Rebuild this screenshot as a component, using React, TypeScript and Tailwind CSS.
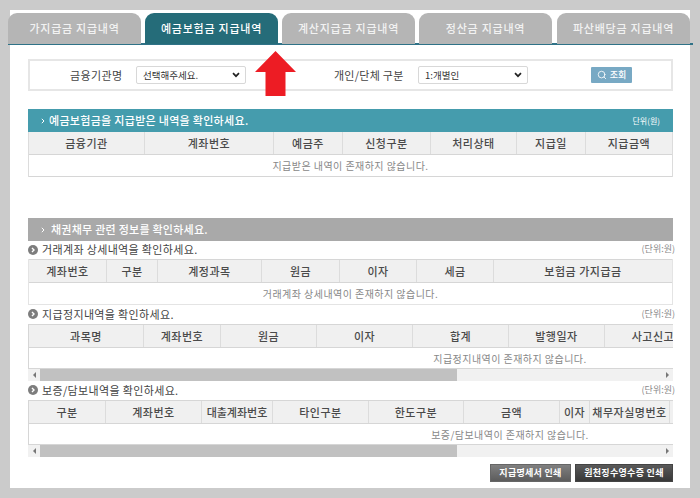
import React from "react";
import { Search } from "lucide-react";

const font = { fontFamily: '"Noto Sans CJK KR", "Noto Sans", sans-serif' };

function Head({ cols, labels, width, h }: { cols: number[]; labels: string[]; width: string; h: string }) {
  return (
    <div className={`flex ${h} ${width} bg-[#f0f0f0] border-y border-[#d6d6d6] shrink-0`}>
      {labels.map((l, i) => (
        <div
          key={i}
          style={{ width: cols[i] }}
          className={`shrink-0 flex items-center justify-center whitespace-nowrap text-[11px] text-[#4a4a4a] font-medium border-r border-[#dcdcdc] last:border-r-0 overflow-hidden ${
            l === "대출계좌번호" ? "tracking-[0px]" : "tracking-[0.5px]"
          }`}
        >
          {l}
        </div>
      ))}
    </div>
  );
}

function SubTitle({ text, h }: { text: string; h: string }) {
  return (
    <div className={`flex items-center ${h}`}>
      <svg width="10" height="10" viewBox="0 0 10 10" className="mr-[4px] mb-[1px] shrink-0">
        <circle cx="5" cy="5" r="5" fill="#7d7d7d" />
        <path d="M4 3 L6 5 L4 7" fill="none" stroke="#ffffff" strokeWidth="1.4" />
      </svg>
      <span className="mb-[1px] text-[11px] tracking-[0.35px] text-[#444]">{text}</span>
      <span className="ml-auto mr-[-2px] mb-[2px] text-[9px] text-[#8a8a8a]">(단위:원)</span>
    </div>
  );
}

function ScrollBar() {
  return (
    <div className="flex items-center h-[12px] bg-[#f1f1f1]">
      <div className="w-[12px] flex justify-center">
        <div className="w-0 h-0 border-y-[3px] border-y-transparent border-r-[3px] border-r-[#777]" />
      </div>
      <div className="w-[417px] h-full bg-[#c1c1c1]" />
      <div className="ml-auto w-[12px] flex justify-center">
        <div className="w-0 h-0 border-y-[3px] border-y-transparent border-l-[3px] border-l-[#777]" />
      </div>
    </div>
  );
}

function Tab({ label, active, w = "w-[133px]" }: { label: string; active?: boolean; w?: string }) {
  return (
    <div
      className={`${w} h-[31px] rounded-t-[9px] flex items-center justify-center text-[11px] tracking-[0.75px] font-medium ${
        active ? "bg-[#256c79] text-white" : "bg-[#b5b5b5] text-[#f2f2f2]"
      }`}
    >
      {label}
    </div>
  );
}

function Select({ w, text }: { w: string; text: string }) {
  return (
    <div className={`${w} h-[18px] bg-white border border-[#d8d8d8] rounded-[2px] flex items-center pl-[6px] pr-[5px]`}>
      <span className="text-[9.5px] text-[#333]">{text}</span>
      <svg width="8" height="6" viewBox="0 0 8 6" className="ml-auto">
        <path d="M1 1.2 L4 4.2 L7 1.2" fill="none" stroke="#222" strokeWidth="1.7" />
      </svg>
    </div>
  );
}

function Chevron() {
  return (
    <svg width="4" height="6" viewBox="0 0 4 6" className="mr-[4px] shrink-0">
      <path d="M0.8 0.8 L3 3 L0.8 5.2" fill="none" stroke="#ffffff" strokeWidth="1" />
    </svg>
  );
}

const t1 = [116, 129, 69, 88, 86, 69, 86];
const t2 = [78, 51, 104, 78, 77, 77, 178];
const t3 = [115, 77, 96, 96, 96, 96, 97, 90];
const t4 = [77, 96, 71, 96, 95, 96, 30, 80, 60];

export default function App() {
  return (
    <div style={font} className="relative w-[700px] h-[498px] overflow-hidden bg-[#cbcbcb] p-[10px]">
      <div className="h-[478px] bg-white">
        <div className="ml-[-2px] mr-[-3px] pt-[3px] flex gap-[4px] h-[35px] border-b-2 border-[#2f7287]">
          <Tab label="가지급금 지급내역" />
          <Tab label="예금보험금 지급내역" active />
          <Tab label="계산지급금 지급내역" />
          <Tab label="정산금 지급내역" />
          <Tab label="파산배당금 지급내역" w="w-[133px] ml-[1px]" />
        </div>

        <div className="mx-[18px] w-[645px]">
          <div className="mt-[14px] h-[32px] border-2 border-[#e6e6e6] flex items-center">
            <span className="ml-[40px] w-[66px] text-[11px] tracking-[0.35px] text-[#444]">금융기관명</span>
            <Select w="w-[110px]" text="선택해주세요." />
            <span className="ml-[88px] w-[84px] text-[11px] tracking-[0.25px] text-[#444] whitespace-nowrap">개인/단체 구분</span>
            <Select w="w-[110px]" text="1:개별인" />
            <div className="ml-[63px] w-[41px] h-[16px] bg-[#78a9c4] rounded-[1px] flex items-center justify-center gap-[3px] text-[9px] font-medium text-white">
              <Search size={10} strokeWidth={2} />
              <span>조회</span>
            </div>
          </div>

          <div className="mt-[18px] h-[23px] bg-[#459cad] flex items-center text-white pl-[13px] pr-[13px]">
            <Chevron />
            <span className="text-[11px] tracking-[0.3px] font-medium">예금보험금을 지급받은 내역을 확인하세요.</span>
            <span className="ml-auto text-[8px]">단위(원)</span>
          </div>
          <div className="border-x border-[#dcdcdc]">
            <Head cols={t1} width="w-[643px] border-t-0" h="h-[23px]" labels={["금융기관", "계좌번호", "예금주", "신청구분", "처리상태", "지급일", "지급금액"]} />
            <div className="h-[22px] border-b border-[#d6d6d6] flex items-center justify-center text-[10px] tracking-[0.45px] text-[#888]">
              지급받은 내역이 존재하지 않습니다.
            </div>
          </div>

          <div className="mt-[41px] h-[23px] bg-[#a9a9a9] flex items-center text-white pl-[13px]">
            <Chevron />
            <span className="ml-[2px] text-[11px] tracking-[0.25px] font-medium">채권채무 관련 정보를 확인하세요.</span>
          </div>

          <SubTitle text="거래계좌 상세내역을 확인하세요." h="h-[18px]" />
          <div className="border-x border-[#e4e4e4]">
            <Head cols={t2} width="w-[643px]" h="h-[24px]" labels={["계좌번호", "구분", "계정과목", "원금", "이자", "세금", "보험금 가지급금"]} />
            <div className="h-[22px] border-b border-[#e4e4e4] flex items-center justify-center text-[10px] tracking-[0.45px] text-[#888]">
              거래계좌 상세내역이 존재하지 않습니다.
            </div>
          </div>

          <SubTitle text="지급정지내역을 확인하세요." h="h-[19px]" />
          <div className="border-l border-[#d6d6d6] overflow-hidden">
            <Head cols={t3} width="w-[962px]" h="h-[24px]" labels={["과목명", "계좌번호", "원금", "이자", "합계", "발행일자", "사고신고", ""]} />
            <div className="h-[21px] w-[962px] flex items-center justify-center text-[10px] tracking-[0.45px] text-[#888] border-b border-[#d6d6d6]">
              지급정지내역이 존재하지 않습니다.
            </div>
          </div>
          <ScrollBar />

          <SubTitle text="보증/담보내역을 확인하세요." h="h-[19px]" />
          <div className="border-l border-[#d6d6d6] overflow-hidden">
            <Head cols={t4} width="w-[962px]" h="h-[24px]" labels={["구분", "계좌번호", "대출계좌번호", "타인구분", "한도구분", "금액", "이자", "채무자실명번호", ""]} />
            <div className="h-[21px] w-[962px] flex items-center justify-center text-[10px] tracking-[0.45px] text-[#888] border-b border-[#d6d6d6]">
              보증/담보내역이 존재하지 않습니다.
            </div>
          </div>
          <ScrollBar />

          <div className="mt-[7px] flex justify-end gap-[4px]">
            <div className="w-[81px] h-[18px] bg-gradient-to-b from-[#808080] to-[#5c5c5c] border border-[#666] flex items-center justify-center text-[9px] tracking-[0.3px] text-white font-bold">
              지급명세서 인쇄
            </div>
            <div className="w-[98px] h-[18px] bg-gradient-to-b from-[#5a5a5a] to-[#383838] border border-[#444] flex items-center justify-center text-[9px] tracking-[0.3px] text-white font-bold">
              원천징수영수증 인쇄
            </div>
          </div>
        </div>
      </div>

      <svg width="41" height="46" viewBox="0 0 41 46" className="absolute left-[255px] top-[51px]">
        <polygon points="20.5,0 41,21 30.5,21 30.5,45 10.5,45 10.5,21 0,21" fill="#ed1c24" />
      </svg>
    </div>
  );
}
